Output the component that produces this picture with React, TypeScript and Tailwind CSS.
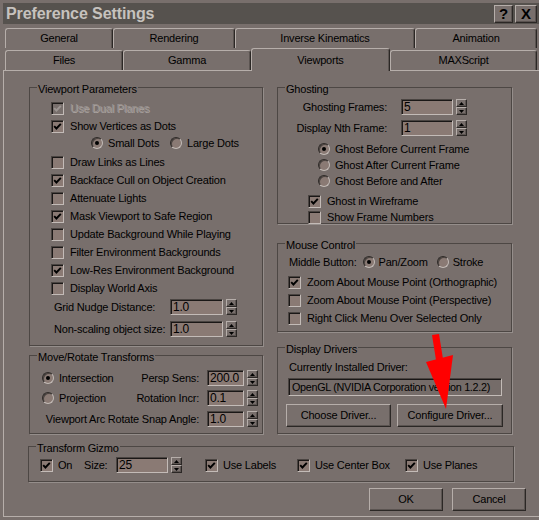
import React from "react";

// classic 3D edges, tinted to the dialog's grey-mauve theme
const raised =
  "border border-t-[#b6aeaa] border-l-[#b6aeaa] border-b-[#2b2725] border-r-[#2b2725] shadow-[inset_-1px_-1px_0_#5b5451]";
const sunken =
  "border border-t-[#4a4441] border-l-[#4a4441] border-b-[#c3bbb7] border-r-[#c3bbb7] shadow-[inset_1px_1px_0_#1a1716]";

function Check({ on = false, off = false }: { on?: boolean; off?: boolean }) {
  return (
    <span
      className={`flex h-[13px] w-[13px] shrink-0 items-center justify-center ${sunken} ${
        off ? "bg-[#786f6c]" : "bg-[#8a7a74]"
      }`}
    >
      {on && (
        <svg width="9" height="9" viewBox="0 0 9 9">
          <path
            d="M1.2 4.2 L3.4 6.5 L7.8 1.8"
            fill="none"
            stroke={off ? "#9c9592" : "#000"}
            strokeWidth="1.9"
          />
        </svg>
      )}
    </span>
  );
}

function Radio({ on = false }: { on?: boolean }) {
  return (
    <span className="flex h-[12px] w-[12px] shrink-0 items-center justify-center rounded-full border border-t-[#2e2a28] border-l-[#2e2a28] border-b-[#c3bbb7] border-r-[#c3bbb7] bg-[#8a7a74] shadow-[inset_1px_1px_0_#4a4441]">
      {on && <span className="h-[4px] w-[4px] rounded-full bg-black" />}
    </span>
  );
}

function Spin() {
  return (
    <span className="ml-[3px] flex h-[16px] w-[11px] shrink-0 flex-col">
      <span className={`flex h-[8px] items-center justify-center bg-[#786f6c] ${raised}`}>
        <svg width="5" height="3" viewBox="0 0 5 3">
          <path d="M2.5 0 L5 3 L0 3Z" fill="#000" />
        </svg>
      </span>
      <span className={`flex h-[8px] items-center justify-center bg-[#786f6c] ${raised}`}>
        <svg width="5" height="3" viewBox="0 0 5 3">
          <path d="M0 0 L5 0 L2.5 3Z" fill="#000" />
        </svg>
      </span>
    </span>
  );
}

function Field({ value, className }: { value: string; className: string }) {
  return (
    <span
      className={`flex h-[16px] shrink-0 items-center bg-[#8a7a74] pl-[2px] text-[12px] leading-none ${sunken} ${className}`}
    >
      {value}
    </span>
  );
}

function Group({
  title,
  className,
  children,
}: {
  title: string;
  className: string;
  children?: React.ReactNode;
}) {
  return (
    <div className={`relative shrink-0 border border-[#4d4744] shadow-[1px_1px_0_#958e8b] ${className}`}>
      <span className="absolute left-[7px] top-[-6px] bg-[#786f6c] px-[1px] leading-[14px]">{title}</span>
      {children}
    </div>
  );
}

function CheckRow({
  label,
  on = false,
  off = false,
  className = "h-[18px]",
}: {
  label: string;
  on?: boolean;
  off?: boolean;
  className?: string;
}) {
  return (
    <div className={`flex items-center ${className}`}>
      <Check on={on} off={off} />
      <span
        className={`ml-[6px] whitespace-nowrap ${
          off ? "text-[#99928f] [text-shadow:1px_1px_0_#aaa3a0]" : ""
        }`}
      >
        {label}
      </span>
    </div>
  );
}

function Tab({ label, className, sel = false }: { label: string; className: string; sel?: boolean }) {
  return (
    <div
      className={`flex shrink-0 items-center justify-center rounded-t-[3px] border-l border-t border-r border-l-[#b6aeaa] border-t-[#b6aeaa] border-r-[#2b2725] bg-[#786f6c] shadow-[inset_-1px_0_0_#5b5451] ${
        sel ? "relative z-10 -mb-[1px] h-[23px]" : "h-[20px]"
      } ${className}`}
    >
      {label}
    </div>
  );
}

function Button({ label, className }: { label: string; className: string }) {
  return (
    <div className={`flex h-[23px] shrink-0 items-center justify-center bg-[#786f6c] ${raised} ${className}`}>
      {label}
    </div>
  );
}

export default function App() {
  return (
    <div className="relative h-[520px] w-[539px] overflow-hidden bg-[#786f6c] pt-[3px] font-['Liberation_Sans',Arial,sans-serif] text-[11px] tracking-[-0.2px] text-black">
      {/* title bar */}
      <div className="ml-[3px] flex h-[21px] items-center justify-between bg-[#56524e] pl-[3px] pr-[2px]">
        <span className="text-[16px] font-bold leading-none tracking-[-0.1px] text-[#c6c2be]">
          Preference Settings
        </span>
        <div className="flex gap-[2px]">
          <span className={`flex h-[18px] w-[19px] items-center justify-center bg-[#786f6c] text-[15px] font-bold leading-none ${raised}`}>
            ?
          </span>
          <span className={`flex h-[18px] w-[22px] items-center justify-center bg-[#786f6c] text-[15px] font-bold leading-none ${raised}`}>
            X
          </span>
        </div>
      </div>

      {/* tabs */}
      <div className="mt-[4px] flex h-[20px] pl-[5px]">
        <Tab label="General" className="w-[108px]" />
        <Tab label="Rendering" className="w-[122px]" />
        <Tab label="Inverse Kinematics" className="w-[180px]" />
        <Tab label="Animation" className="w-[122px]" />
      </div>
      <div className="flex h-[22px] items-end pl-[5px]">
        <Tab label="Files" className="w-[118px]" />
        <Tab label="Gamma" className="w-[128px]" />
        <Tab label="Viewports" className="w-[139px]" sel />
        <Tab label="MAXScript" className="w-[147px]" />
      </div>

      {/* body */}
      <div className="ml-[3px] h-[447px] border-l border-t border-b border-l-[#b6aeaa] border-t-[#b6aeaa] border-b-[#b6aeaa] pl-[25px] pt-[16px]">
        <div className="flex gap-[14px]">
          {/* left column */}
          <div className="flex w-[234px] flex-col gap-[9px]">
            <Group title="Viewport Parameters" className="h-[259px] w-[234px] pl-[21px] pt-[11px]">
              <CheckRow label="Use Dual Planes" on off />
              <CheckRow label="Show Vertices as Dots" on />
              <div className="flex h-[16px] items-center pl-[40px]">
                <div className="flex w-[79px] items-center">
                  <Radio on />
                  <span className="ml-[5px]">Small Dots</span>
                </div>
                <Radio />
                <span className="ml-[5px]">Large Dots</span>
              </div>
              <CheckRow label="Draw Links as Lines" className="mt-[2px] h-[18px]" />
              <CheckRow label="Backface Cull on Object Creation" on />
              <CheckRow label="Attenuate Lights" />
              <CheckRow label="Mask Viewport to Safe Region" on />
              <CheckRow label="Update Background While Playing" />
              <CheckRow label="Filter Environment Backgrounds" />
              <CheckRow label="Low-Res Environment Background" on />
              <CheckRow label="Display World Axis" />
              <div className="mt-[2px] flex h-[16px] items-center pl-[3px]">
                <span className="w-[116px]">Grid Nudge Distance:</span>
                <Field value="1.0" className="w-[53px]" />
                <Spin />
              </div>
              <div className="mt-[6px] flex h-[16px] items-center pl-[3px]">
                <span className="w-[116px] whitespace-nowrap">Non-scaling object size:</span>
                <Field value="1.0" className="w-[53px]" />
                <Spin />
              </div>
            </Group>

            <Group title="Move/Rotate Transforms" className="h-[79px] w-[234px] pl-[12px] pr-[4px] pt-[14px]">
              <div className="flex h-[16px] items-center">
                <Radio on />
                <span className="ml-[5px]">Intersection</span>
                <span className="ml-auto mr-[8px]">Persp Sens:</span>
                <Field value="200.0" className="w-[37px]" />
                <Spin />
              </div>
              <div className="mt-[4px] flex h-[16px] items-center">
                <Radio />
                <span className="ml-[5px]">Projection</span>
                <span className="ml-auto mr-[8px]">Rotation Incr:</span>
                <Field value="0.1" className="w-[37px]" />
                <Spin />
              </div>
              <div className="mt-[5px] flex h-[16px] items-center">
                <span className="ml-auto mr-[8px] whitespace-nowrap">Viewport Arc Rotate Snap Angle:</span>
                <Field value="1.0" className="w-[37px]" />
                <Spin />
              </div>
            </Group>
          </div>

          {/* right column */}
          <div className="flex w-[235px] flex-col">
            <Group title="Ghosting" className="h-[137px] w-[235px] pt-[11px]">
              <div className="flex h-[16px] items-center">
                <span className="w-[109px] text-right">Ghosting Frames:</span>
                <Field value="5" className="ml-[14px] w-[52px]" />
                <Spin />
              </div>
              <div className="mt-[5px] flex h-[16px] items-center">
                <span className="w-[109px] text-right">Display Nth Frame:</span>
                <Field value="1" className="ml-[14px] w-[52px]" />
                <Spin />
              </div>
              <div className="mt-[5px] pl-[40px]">
                <div className="flex h-[16px] items-center">
                  <Radio on />
                  <span className="ml-[5px]">Ghost Before Current Frame</span>
                </div>
                <div className="flex h-[16px] items-center">
                  <Radio />
                  <span className="ml-[5px]">Ghost After Current Frame</span>
                </div>
                <div className="flex h-[16px] items-center">
                  <Radio />
                  <span className="ml-[5px]">Ghost Before and After</span>
                </div>
              </div>
              <div className="mt-[4px] pl-[30px]">
                <CheckRow label="Ghost in Wireframe" on className="h-[16px]" />
                <CheckRow label="Show Frame Numbers" className="h-[16px]" />
              </div>
            </Group>

            <Group title="Mouse Control" className="mt-[19px] h-[89px] w-[235px] pt-[9px]">
              <div className="flex h-[18px] items-center pl-[11px]">
                <span>Middle Button:</span>
                <span className="ml-[6px]">
                  <Radio on />
                </span>
                <span className="ml-[4px]">Pan/Zoom</span>
                <span className="ml-[9px]">
                  <Radio />
                </span>
                <span className="ml-[4px]">Stroke</span>
              </div>
              <div className="mt-[2px] pl-[10px]">
                <CheckRow label="Zoom About Mouse Point (Orthographic)" on />
                <CheckRow label="Zoom About Mouse Point (Perspective)" />
                <CheckRow label="Right Click Menu Over Selected Only" />
              </div>
            </Group>

            <Group title="Display Drivers" className="mt-[15px] h-[87px] w-[235px] pt-[12px]">
              <div className="flex h-[14px] items-center pl-[11px]">Currently Installed Driver:</div>
              <div
                className={`ml-[10px] mt-[4px] flex h-[18px] w-[214px] items-center overflow-hidden whitespace-nowrap bg-[#756c69] pl-[3px] text-[10.8px] tracking-[-0.3px] ${sunken}`}
              >
                OpenGL (NVIDIA Corporation version 1.2.2)
              </div>
              <div className="ml-[8px] mt-[8px] flex gap-[6px]">
                <Button label="Choose Driver..." className="w-[105px]" />
                <Button label="Configure Driver..." className="w-[106px]" />
              </div>
            </Group>
          </div>
        </div>

        <Group title="Transform Gizmo" className="-ml-[1px] mt-[12px] h-[36px] w-[486px] pl-[11px] pt-[10px]">
          <div className="flex h-[16px] items-center">
            <Check on />
            <span className="ml-[5px] w-[26px]">On</span>
            <span className="w-[32px]">Size:</span>
            <Field value="25" className="w-[52px]" />
            <Spin />
            <span className="ml-[23px]">
              <Check on />
            </span>
            <span className="ml-[5px] w-[74px]">Use Labels</span>
            <Check on />
            <span className="ml-[5px] w-[90px]">Use Center Box</span>
            <Check on />
            <span className="ml-[5px]">Use Planes</span>
          </div>
        </Group>

        <div className="mt-[6px] flex justify-end gap-[9px] pr-[13px]">
          <Button label="OK" className="w-[74px]" />
          <Button label="Cancel" className="w-[74px]" />
        </div>
      </div>

      {/* red annotation arrow drawn over the dialog */}
      <svg className="pointer-events-none absolute left-0 top-0" width="539" height="520" viewBox="0 0 539 520">
        <polygon points="432,335 439,334 443,359 436,360" fill="#ff0000" />
        <polygon points="426,362 453,355 446,409" fill="#ff0000" />
      </svg>
    </div>
  );
}
